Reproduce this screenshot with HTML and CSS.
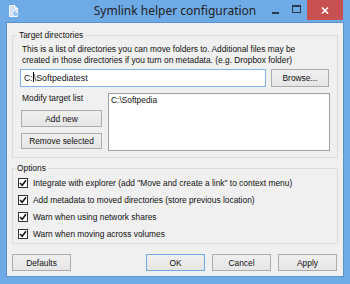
FILE: index.html
```html
<!DOCTYPE html>
<html lang="en">
<head>
  <meta charset="UTF-8" />
  <title>Symlink helper configuration</title>
  <link rel="stylesheet" href="styles.css">
</head>
<body>
  <div class="window">
    <div class="titlebar">
      <div class="title-left">
        <svg class="app-icon" width="10" height="12" viewBox="0 0 10 12">
          <path d="M0.5 0.5 H5.5 L8.5 3.5 V11.5 H0.5 Z" fill="#cfe2f6" stroke="#f4f8fc" stroke-width="1"/>
          <path d="M5.5 0.5 V3.5 H8.5" fill="none" stroke="#f4f8fc" stroke-width="1"/>
          <circle cx="6.5" cy="8.5" r="2.6" fill="#6eaae6" stroke="#f4f8fc" stroke-width="0.8"/>
          <path d="M5.3 9.7 L7.6 7.4 M6.2 7.3 H7.7 V8.8" fill="none" stroke="#f4f8fc" stroke-width="0.8"/>
        </svg>
      </div>
      <div class="title">Symlink helper configuration</div>
      <div class="controls">
        <span class="ctl"><span class="min-glyph"></span></span>
        <span class="ctl"><span class="max-glyph"></span></span>
        <span class="ctl close">
          <svg width="8" height="7" viewBox="0 0 8 7">
            <path d="M1 0.5 L7 6.5 M7 0.5 L1 6.5" stroke="#fff" stroke-width="1.6"/>
          </svg>
        </span>
      </div>
    </div>

    <div class="frame-body">
      <div class="client">
        <fieldset class="group target-group">
          <legend>Target directories</legend>
          <p class="desc">This is a list of directories you can move folders to. Additional files may be<br>created in those directories if you turn on metadata. (e.g. Dropbox folder)</p>

          <div class="path-row">
            <div class="textbox">C:<span class="caret"></span>\Softpediatest</div>
            <button class="btn browse">Browse...</button>
          </div>

          <div class="list-row">
            <div class="list-side">
              <div class="side-label">Modify target list</div>
              <button class="btn side-btn add">Add new</button>
              <button class="btn side-btn remove">Remove selected</button>
            </div>
            <div class="listbox">
              <div class="list-item">C:\Softpedia</div>
            </div>
          </div>
        </fieldset>

        <fieldset class="group options-group">
          <legend>Options</legend>
          <div class="option"><span class="check"><svg width="8" height="8" viewBox="0 0 8 8"><path d="M1 4 L3.2 6.3 L7 1.2" fill="none" stroke="#111" stroke-width="1.5"/></svg></span>Integrate with explorer (add "Move and create a link" to context menu)</div>
          <div class="option"><span class="check"><svg width="8" height="8" viewBox="0 0 8 8"><path d="M1 4 L3.2 6.3 L7 1.2" fill="none" stroke="#111" stroke-width="1.5"/></svg></span>Add metadata to moved directories (store previous location)</div>
          <div class="option"><span class="check"><svg width="8" height="8" viewBox="0 0 8 8"><path d="M1 4 L3.2 6.3 L7 1.2" fill="none" stroke="#111" stroke-width="1.5"/></svg></span>Warn when using network shares</div>
          <div class="option"><span class="check"><svg width="8" height="8" viewBox="0 0 8 8"><path d="M1 4 L3.2 6.3 L7 1.2" fill="none" stroke="#111" stroke-width="1.5"/></svg></span>Warn when moving across volumes</div>
        </fieldset>

        <div class="button-row">
          <button class="btn action">Defaults</button>
          <div class="spacer"></div>
          <button class="btn action default">OK</button>
          <button class="btn action">Cancel</button>
          <button class="btn action last">Apply</button>
        </div>
      </div>
    </div>
  </div>
</body>
</html>
```

FILE: styles.css
```css
* {
  box-sizing: border-box;
}

html, body {
  margin: 0;
  padding: 0;
  height: 100%;
}

body {
  background-color: #6eaae6;
  font-family: 'Liberation Sans', Arial, sans-serif;
  font-size: 8.4px;
  color: #111;
}

.window {
  display: flex;
  flex-direction: column;
  height: 284px;
}

/* title bar */
.titlebar {
  height: 22px;
  display: grid;
  grid-template-columns: 1fr auto 1fr;
}

.title-left {
  padding: 5px 0 0 9px;
}

.app-icon {
  display: block;
}

.title {
  font-family: 'Noto Sans', sans-serif;
  font-size: 12px;
  line-height: 22px;
  color: #222;
  padding-bottom: 1px;
}

.controls {
  display: flex;
  justify-content: flex-end;
  align-items: flex-start;
  padding-right: 7px;
}

.ctl {
  width: 21px;
  height: 20px;
  display: flex;
  justify-content: center;
}

.min-glyph {
  width: 7px;
  height: 2px;
  margin-top: 12px;
  background-color: #2a3a4c;
}

.max-glyph {
  width: 9px;
  height: 8px;
  margin-top: 5px;
  border: 1px solid #2a3a4c;
  border-top-width: 2px;
}

.close {
  width: 36px;
  background-color: #c75050;
  align-items: center;
}

.close svg {
  display: block;
}

/* client area */
.frame-body {
  flex: 1;
  display: flex;
  padding: 0 6px 7px;
}

.client {
  flex: 1;
  display: flex;
  flex-direction: column;
  background-color: #f0f0f0;
  border: 1px solid #5c92cc;
  padding: 0 5px;
}

.group {
  margin: 0;
  border: 1px solid #dcdcdc;
  border-radius: 0;
  min-width: 0;
}

.group legend {
  margin-left: -3px;
  padding: 0 2px;
  line-height: 10px;
  color: #111;
}

.target-group {
  margin-top: 7px;
  padding: 4px 8px 6px 7px;
}

.desc {
  margin: 0 0 0 2px;
  line-height: 11px;
}

.path-row {
  display: flex;
  gap: 5px;
  margin-top: 3px;
  height: 18px;
}

.textbox {
  flex: 1;
  background-color: #fff;
  border: 1px solid #7eb4ea;
  padding: 0 3px;
  line-height: 16px;
  font-size: 8.8px;
}

.caret {
  display: inline-block;
  width: 1px;
  height: 10px;
  background-color: #000;
  vertical-align: -1px;
}

.btn {
  font-family: 'Liberation Sans', Arial, sans-serif;
  font-size: 8.4px;
  color: #111;
  background: linear-gradient(#f0f0f0, #e5e5e5);
  border: 1px solid #acacac;
  border-radius: 0;
  padding: 0;
  margin: 0;
}

.browse {
  width: 58px;
}

.list-row {
  display: flex;
  gap: 6px;
  margin-top: 6px;
  height: 58px;
  margin-right: -1px;
}

.list-side {
  width: 82px;
  display: flex;
  flex-direction: column;
  padding-left: 1px;
}

.side-label {
  margin-left: 1px;
  line-height: 10px;
}

.side-btn {
  height: 17px;
}

.add {
  margin-top: 7px;
}

.remove {
  margin-top: 6px;
  height: 16px;
}

.listbox {
  flex: 1;
  background-color: #fff;
  border: 1px solid #a0a0a0;
  padding: 1px 2px;
}

.list-item {
  line-height: 10px;
}

.options-group {
  margin-top: 5px;
  padding: 1px 8px 1px 5px;
}

.option {
  height: 17px;
  display: flex;
  align-items: center;
  gap: 5px;
}

.check {
  width: 10px;
  height: 10px;
  background-color: #fff;
  border: 1px solid #333;
  display: flex;
  align-items: center;
  justify-content: center;
}

.check svg {
  display: block;
}

.button-row {
  display: flex;
  gap: 7px;
  margin-top: 10px;
  height: 17px;
}

.spacer {
  flex: 1;
}

.action {
  width: 59px;
}

.action.default {
  border-color: #6ea9e0;
}

.action.last {
  margin-right: 1px;
}
```
